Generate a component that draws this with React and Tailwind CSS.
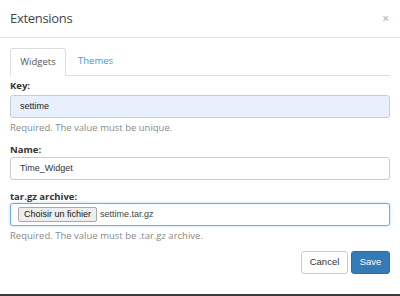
import React from "react";

const arial = { fontFamily: '"Liberation Sans", Arial, sans-serif' };

export default function App() {
  return (
    <div className="w-[400px] h-[296px] bg-white relative overflow-hidden flex flex-col" style={{ fontFamily: '"Open Sans", sans-serif' }}>
      <div className="h-[38px] border-b border-[#e5e5e5] flex items-center justify-between pl-[10px] pr-[11px] shrink-0">
        <span className="text-[13px] text-[#444] leading-none tracking-[-0.3px]">Extensions</span>
        <span className="text-[12px] text-[#c4c4c4] font-bold leading-none">×</span>
      </div>
      <div className="px-[10px] pt-[10px] flex flex-col">
        <div className="flex border-b border-[#ddd] h-[28px]">
          <div className="w-[56px] h-[28px] border border-[#ddd] border-b-white rounded-t-[3px] bg-white flex items-center justify-center text-[9.5px] text-[#555]">Widgets</div>
          <div className="px-[12px] h-[27px] flex items-center text-[9.5px] text-[#3a9ad4]">Themes</div>
        </div>
        <label className="mt-[4px] text-[9.5px] font-bold text-[#333] leading-[12px]">Key:</label>
        <div className="mt-[3px] h-[23px] border border-[#ccc] rounded-[3px] bg-[#e8f0fe] flex items-center pl-[9px] text-[9px] text-[#222]" style={arial}>settime</div>
        <div className="mt-[3px] text-[9.5px] text-[#8a8a8a] leading-[14px]">Required. The value must be unique.</div>
        <label className="mt-[9px] text-[9.5px] font-bold text-[#333] leading-[12px]">Name:</label>
        <div className="mt-[1px] h-[23px] border border-[#ccc] rounded-[3px] bg-white flex items-center pl-[9px] text-[9px] text-[#333]" style={arial}>Time_Widget</div>
        <label className="mt-[11px] text-[9.5px] font-bold text-[#333] leading-[12px]">tar.gz archive:</label>
        <div className="h-[23px] border border-[#66afe9] rounded-[3px] bg-white flex items-center pl-[7px] gap-[3px] text-[9px] text-[#333] shadow-[0_0_3px_rgba(102,175,233,0.5)]" style={arial}>
          <span className="h-[15px] px-[5px] flex items-center bg-[#eee] border border-[#aaa] rounded-[2px] text-[#111]">Choisir un fichier</span>
          <span className="text-[#444]">settime.tar.gz</span>
        </div>
        <div className="mt-[3px] text-[9.5px] text-[#8a8a8a] leading-[14px]">Required. The value must be .tar.gz archive.</div>
        <div className="mt-[8px] flex justify-end gap-[3px]">
          <button className="h-[23px] w-[47px] border border-[#ccc] rounded-[3px] bg-white text-[9.5px] text-[#333]" style={arial}>Cancel</button>
          <button className="h-[23px] w-[39px] border border-[#2e6da4] rounded-[3px] bg-[#337ab7] text-[9.5px] text-white" style={arial}>Save</button>
        </div>
      </div>
      <div className="absolute left-0 right-0 bottom-0 h-[2px] bg-[#3a3a3a]" />
    </div>
  );
}
